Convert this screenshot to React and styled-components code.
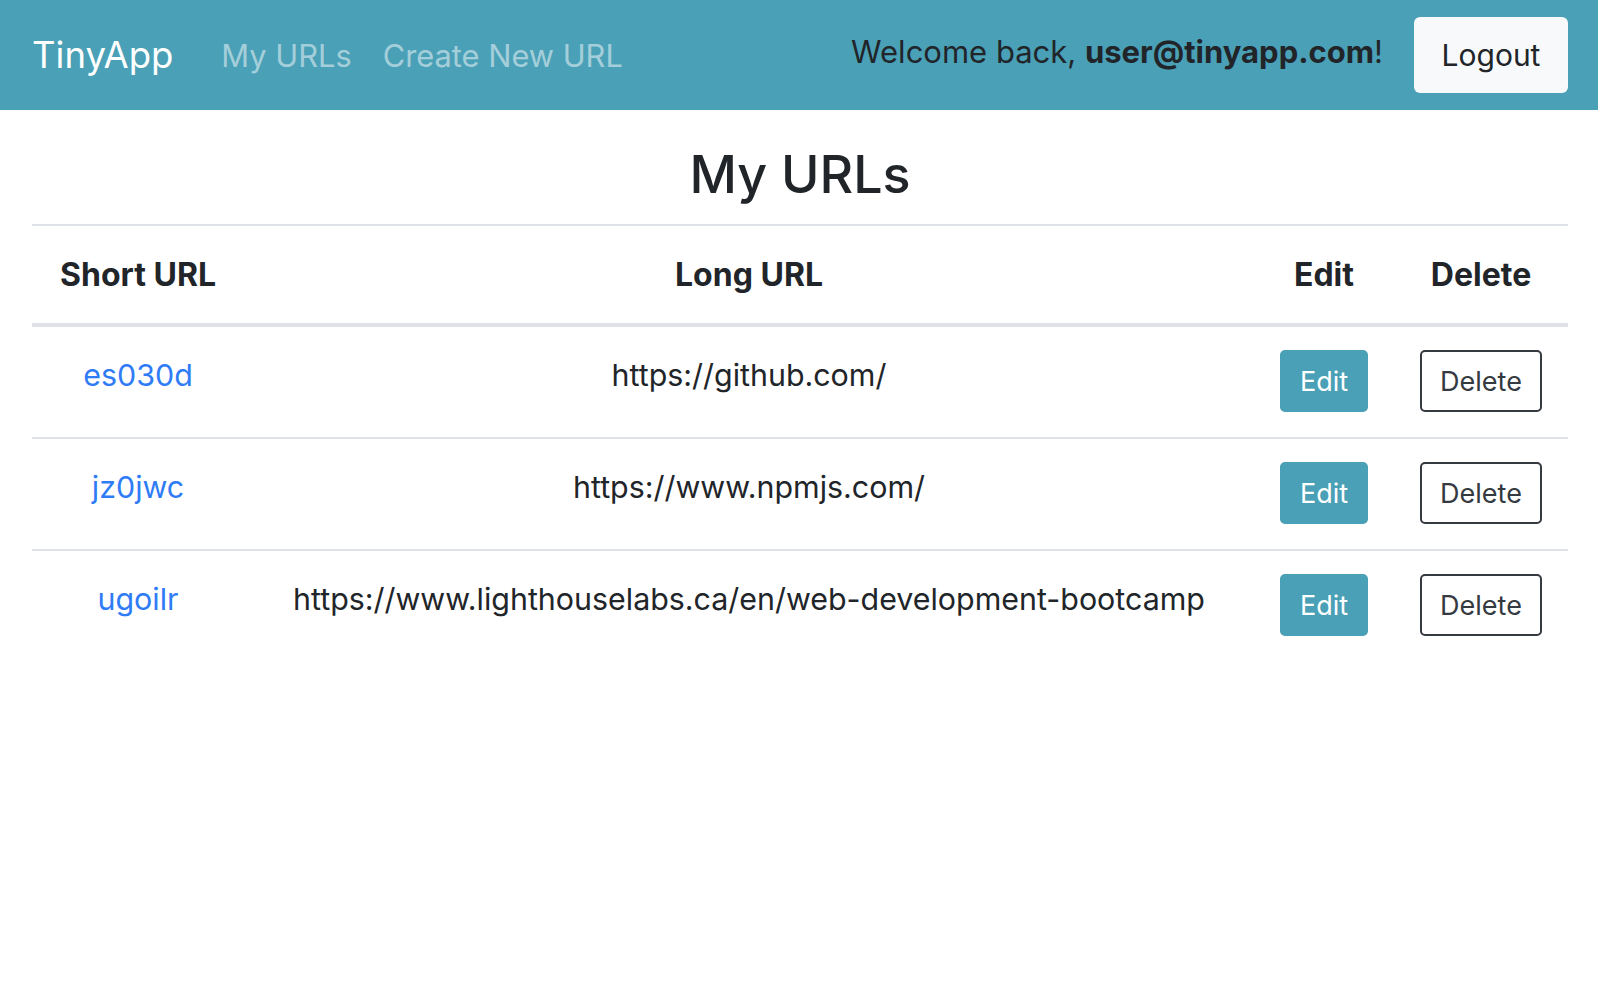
import React from "react";
import styled, { createGlobalStyle } from "styled-components";

const GlobalStyle = createGlobalStyle`
  body {
    margin: 0;
    background: #fff;
    font-family: "Inter", "Noto Sans", sans-serif;
    color: #212529;
  }
`;

const urls = [
  { id: "es030d", long: "https://github.com/" },
  { id: "jz0jwc", long: "https://www.npmjs.com/" },
  { id: "ugoilr", long: "https://www.lighthouselabs.ca/en/web-development-bootcamp" },
];

// Barra de navegação
const Nav = styled.nav`
  display: flex;
  align-items: center;
  height: 110px;
  padding: 0 30px 0 32px;
  background: #4aa0b6;
  box-sizing: border-box;
`;

const Brand = styled.a`
  font-size: 36.5px;
  color: #fff;
  text-decoration: none;
  margin-right: 48px;
`;

const NavLinks = styled.div`
  display: flex;
  gap: 31px;
`;

const NavLink = styled.a`
  font-size: 30.8px;
  color: rgba(255, 255, 255, 0.5);
  text-decoration: none;
`;

const RightSide = styled.div`
  margin-left: auto;
  display: flex;
  align-items: center;
  gap: 31px;
`;

const Welcome = styled.span`
  font-size: 31px;
  color: #212529;
  margin-bottom: 8px;

  b {
    font-weight: 700;
  }
`;

const LogoutButton = styled.button`
  width: 154px;
  height: 76px;
  background: #f8f9fa;
  border: none;
  border-radius: 6px;
  font-family: inherit;
  font-size: 30px;
  color: #212529;
`;

// Conteúdo principal
const Main = styled.main`
  padding: 0 30px 0 32px;
`;

const Title = styled.h1`
  font-size: 52px;
  font-weight: 500;
  line-height: 1.2;
  text-align: center;
  margin: 34px 0 18px;
`;

const Table = styled.table`
  width: 100%;
  border-collapse: collapse;
  table-layout: fixed;
  text-align: center;
  border-top: 2px solid #dee2e6;
`;

const Th = styled.th`
  width: ${(p) => p.$w || "auto"};
  padding: 26px 0;
  font-size: 32px;
  font-weight: 700;
  line-height: 45px;
  border-bottom: 4px solid #dee2e6;
`;

const Row = styled.tr`
  border-bottom: ${(p) => (p.$last ? "none" : "2px solid #dee2e6")};
`;

const Td = styled.td`
  padding: ${(p) => (p.$action ? "23px 0 25px" : "26px 0 22px")};
  font-size: 30.4px;
  line-height: 45px;
  vertical-align: top;
`;

const ShortLink = styled.a`
  color: #2f7cf6;
  text-decoration: none;
`;

const Button = styled.button`
  display: inline-block;
  vertical-align: top;
  height: 62px;
  padding: 0 18px;
  border-radius: 5px;
  font-family: inherit;
  font-size: 27px;
  line-height: 1;
  border: 2px solid ${(p) => (p.$variant === "edit" ? "#4aa0b6" : "#343a40")};
  background: ${(p) => (p.$variant === "edit" ? "#4aa0b6" : "#fff")};
  color: ${(p) => (p.$variant === "edit" ? "#fff" : "#343a40")};
`;

export default function App() {
  return (
    <>
      <GlobalStyle />
      <Nav>
        <Brand href="#">TinyApp</Brand>
        <NavLinks>
          <NavLink href="#">My URLs</NavLink>
          <NavLink href="#">Create New URL</NavLink>
        </NavLinks>
        <RightSide>
          <Welcome>
            Welcome back, <b>user@tinyapp.com</b>!
          </Welcome>
          <LogoutButton>Logout</LogoutButton>
        </RightSide>
      </Nav>

      <Main>
        <Title>My URLs</Title>
        <Table>
          <thead>
            <tr>
              <Th $w="212px">Short URL</Th>
              <Th>Long URL</Th>
              <Th $w="140px">Edit</Th>
              <Th $w="174px">Delete</Th>
            </tr>
          </thead>
          <tbody>
            {urls.map((u, i) => (
              <Row key={u.id} $last={i === urls.length - 1}>
                <Td>
                  <ShortLink href="#">{u.id}</ShortLink>
                </Td>
                <Td>{u.long}</Td>
                <Td $action>
                  <Button $variant="edit">Edit</Button>
                </Td>
                <Td $action>
                  <Button $variant="delete">Delete</Button>
                </Td>
              </Row>
            ))}
          </tbody>
        </Table>
      </Main>
    </>
  );
}
